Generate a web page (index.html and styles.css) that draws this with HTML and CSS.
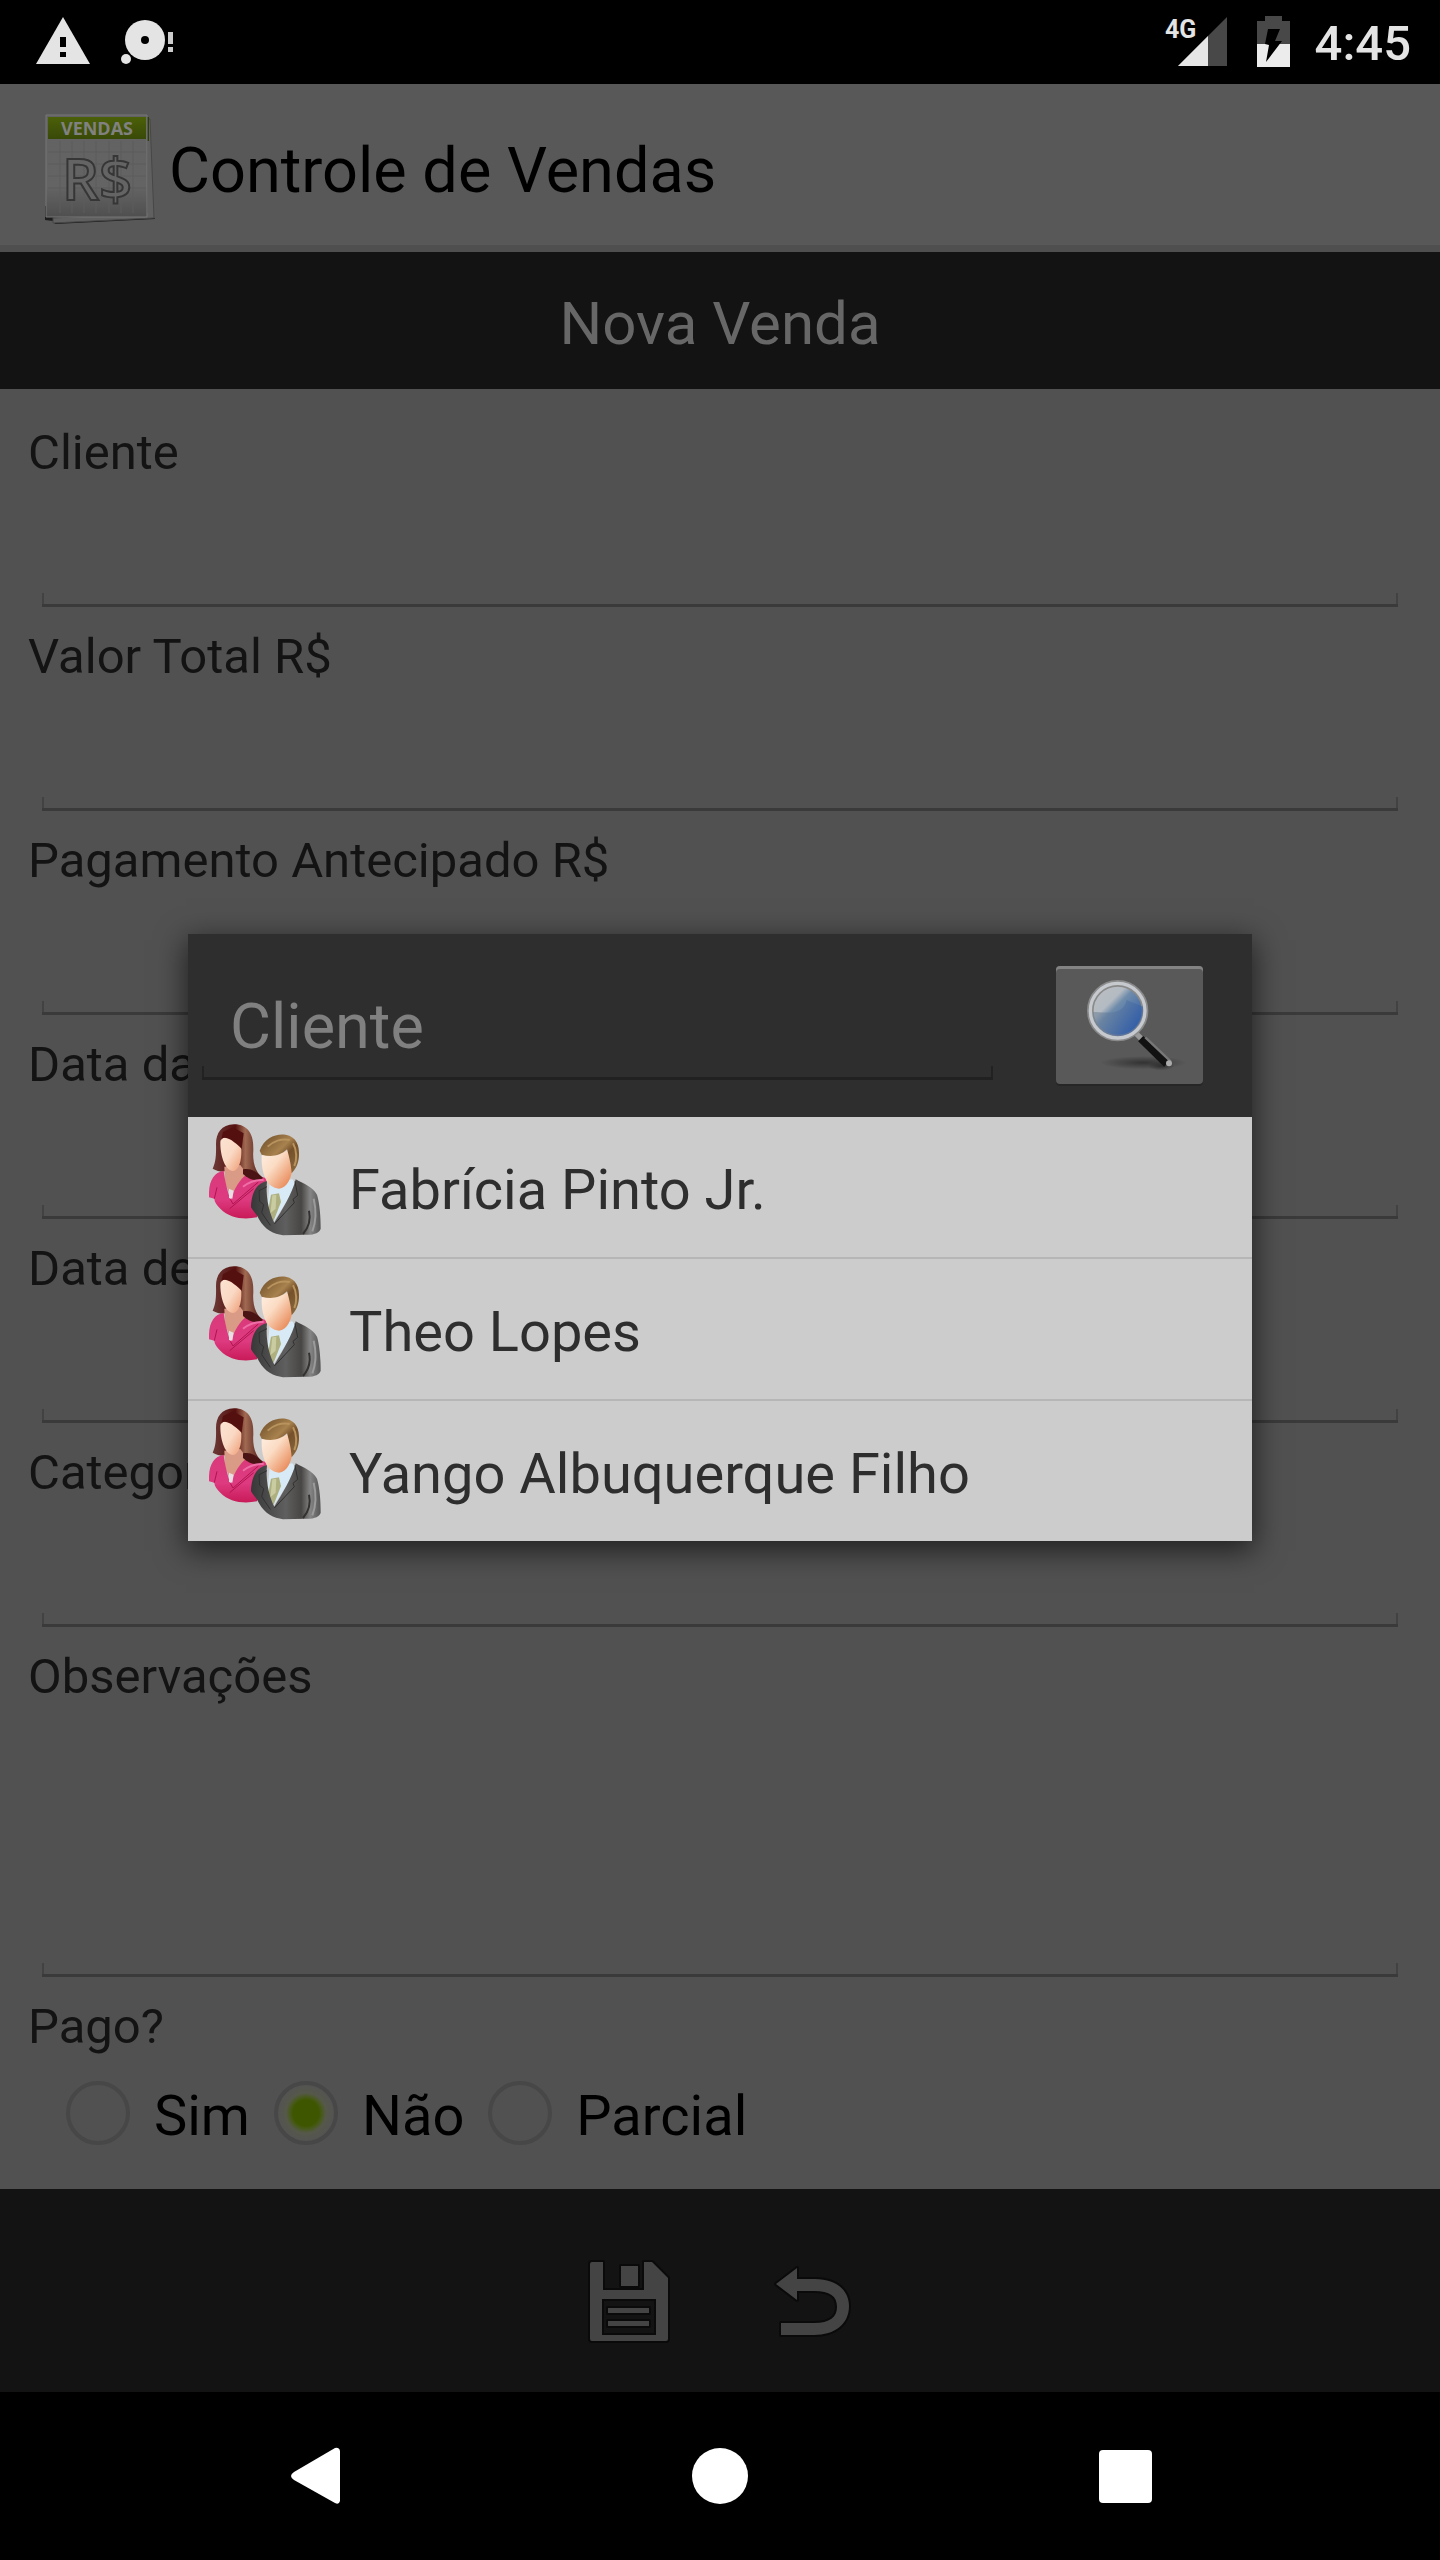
FILE: index.html
```html
<!DOCTYPE html>
<html lang="pt-BR">
<head>
<meta charset="utf-8">
<title>Controle de Vendas</title>
<meta name="viewport" content="width=device-width, initial-scale=1">
<link rel="stylesheet" href="styles.css">
</head>
<body>
<svg class="defs" width="0" height="0" aria-hidden="true">
  <defs>
    <linearGradient id="hairW" x1="0" y1="0" x2="1" y2="0"><stop offset="0" stop-color="#6d3a36"/><stop offset=".45" stop-color="#54100f"/><stop offset=".65" stop-color="#a06a52"/><stop offset="1" stop-color="#4a1414"/></linearGradient>
    <linearGradient id="faceW" x1="0" y1="0" x2="1" y2="1"><stop offset="0" stop-color="#fbe3d3"/><stop offset=".5" stop-color="#fad9c4"/><stop offset="1" stop-color="#ee9c74"/></linearGradient>
    <linearGradient id="pink" x1="0" y1="0" x2="0" y2="1"><stop offset="0" stop-color="#d93a7b"/><stop offset=".6" stop-color="#de3a80"/><stop offset="1" stop-color="#c81a58"/></linearGradient>
    <linearGradient id="hairM" x1="0" y1="0" x2="1" y2="1"><stop offset="0" stop-color="#6b4a26"/><stop offset=".45" stop-color="#a8824e"/><stop offset=".6" stop-color="#75502a"/><stop offset="1" stop-color="#8d6d42"/></linearGradient>
    <linearGradient id="faceM" x1="0" y1="0" x2="1" y2="1"><stop offset="0" stop-color="#fff0e4"/><stop offset=".4" stop-color="#fbdcc4"/><stop offset="1" stop-color="#e4743c"/></linearGradient>
    <linearGradient id="suit" x1="0" y1="0" x2="1" y2="0"><stop offset="0" stop-color="#383838"/><stop offset=".5" stop-color="#5f5f5f"/><stop offset=".72" stop-color="#484644"/><stop offset=".85" stop-color="#858585"/><stop offset="1" stop-color="#555"/></linearGradient>
    <symbol id="people" viewBox="88 612 336 336">
      <path d="M163 613C125 614 109 640 109 672C110 706 108 728 99 746C120 758 140 755 150 750L190 756C205 782 232 786 250 774C226 758 218 722 221 690C223 645 206 613 163 613Z" fill="url(#hairW)"/>
      <path d="M134 740L182 735L204 766L160 842L136 790Z" fill="#d99a86"/>
      <path d="M122 668C122 650 140 650 152 656C168 662 184 670 185 690C186 722 178 752 160 753C138 752 122 712 122 668Z" fill="url(#faceW)"/>
      <path d="M124 662C128 646 150 650 186 686L192 640L160 622L130 636Z" fill="#54100f"/>
      <path d="M88 832C86 786 100 758 132 752C136 786 144 812 152 838C164 806 182 776 200 764C226 766 244 768 262 776L232 892C190 900 150 894 122 866C112 856 104 846 104 836Z" fill="url(#pink)"/>
      <path d="M190 748C214 744 226 752 250 774C232 786 208 780 190 762Z" fill="#4a1414"/>
      <path d="M104 836L112 802M152 838L160 852L236 786M150 866L222 806" fill="none" stroke="#b0144f" stroke-width="3"/>
      <path d="M148 806L162 812L158 836L148 834Z" fill="#e8dfe4"/>
      <path d="M190 800C210 784 230 778 252 780" fill="none" stroke="#ee6fa6" stroke-width="6"/>
      <path d="M270 790L338 778L352 796L282 905L262 880Z" fill="#d9eaf7"/>
      <path d="M274 824L298 820L304 846L282 902L264 878Z" fill="#aeb07f"/>
      <path d="M278 826L290 824L288 866L272 880Z" fill="#c9cba0"/>
      <path d="M246 706C274 700 308 706 326 688L340 730C338 774 322 804 298 806C262 804 244 762 246 706Z" fill="url(#faceM)"/>
      <path d="M240 692C254 652 290 640 318 644C350 650 360 676 358 708C356 736 346 748 336 760C334 734 330 716 322 688C302 708 274 712 246 704Z" fill="url(#hairM)"/>
      <path d="M264 680C280 664 306 654 330 660M340 670C352 690 352 720 344 738" fill="none" stroke="#b8935d" stroke-width="6"/>
      <path d="M262 784C236 788 216 810 214 862C222 876 232 884 238 898C256 930 282 942 310 946L376 944C402 946 420 938 423 926C423 890 420 850 412 824C398 800 374 792 348 778C338 820 306 872 284 908C264 870 258 820 262 784Z" fill="url(#suit)"/>
      <path d="M346 784L354 826L340 838L344 848L284 912M262 800L238 812L240 844L252 854L246 878L272 916" fill="none" stroke="#303030" stroke-width="3"/>
      <path d="M388 872C394 900 386 924 370 942" fill="none" stroke="#343230" stroke-width="6"/>
      <path d="M402 836C410 870 408 908 398 934" fill="none" stroke="#9b9b9b" stroke-width="6"/>
    </symbol>
  </defs>
</svg>

<div class="screen">
  <div class="status">
    <svg width="180" height="84" viewBox="0 0 180 84" aria-hidden="true">
      <path d="M63 17L90 64H36Z" fill="#e4e4e4"/>
      <path d="M60 37h6v10h-6zM60 52h6v5h-6z" fill="#000"/>
      <circle cx="145" cy="40" r="20" fill="#e4e4e4"/>
      <circle cx="145" cy="40" r="4" fill="#000"/>
      <circle cx="126" cy="59" r="5" fill="#e4e4e4"/>
      <path d="M168 32h5v12h-5zM168 47h5v5h-5z" fill="#ccc"/>
    </svg>
    <div class="status-right">
      <svg width="140" height="84" viewBox="1159 0 140 84" aria-hidden="true">
        <path d="M1227 17V66H1178Z" fill="#484848"/>
        <path d="M1208 36V66H1178Z" fill="#e6e6e6"/>
        <text x="1165" y="38" class="net">4G</text>
        <path d="M1265 16h17v5h8v24h-33V21h8z" fill="#484848"/>
        <path d="M1257 44h33v23h-33z" fill="#ececec"/>
        <path d="M1268 29L1280 29L1275 41L1282 41L1266 62L1269 45L1265 44Z" fill="#000"/>
      </svg>
      <span class="clock">4:45</span>
    </div>
  </div>

  <header class="appbar">
    <svg width="112" height="112" viewBox="45 111 112 112" aria-hidden="true">
      <defs>
        <linearGradient id="page" x1="0" y1="0" x2="0" y2="1"><stop offset="0" stop-color="#626262"/><stop offset=".7" stop-color="#646464"/><stop offset="1" stop-color="#4f4f4f"/></linearGradient>
        <linearGradient id="green" x1="0" y1="0" x2="0" y2="1"><stop offset="0" stop-color="#4b6009"/><stop offset="1" stop-color="#394908"/></linearGradient>
      </defs>
      <path d="M45 205v14l8 1 2 3 100-5-8-10z" fill="#1d1d1d"/>
      <path d="M53 217L147 212V118L150 118L154 217L53 222Z" fill="#606060" stroke="#474747"/>
      <path d="M147 116h2v24h-2z" fill="#2f3e08"/>
      <path d="M46 114h101v102H46z" fill="url(#page)" stroke="#777" stroke-width="1"/>
      <path d="M60 140v72M72 140v72M84 140v72M96 140v72M109 140v72M121 140v72M133 140v72M48 151h98M48 163h98M48 175h98M48 187h98M48 199h98" stroke="#5c5c5c" fill="none"/>
      <path d="M48 116h98v22H48z" fill="url(#green)"/>
      <text x="97" y="134" text-anchor="middle" class="logo-name">VENDAS</text>
      <text x="97" y="199" text-anchor="middle" class="logo-cash">R$</text>
    </svg>
    <h1 class="app-title">Controle de Vendas</h1>
  </header>

  <h2 class="section-title">Nova Venda</h2>

  <form class="form">
    <label class="label" for="cliente">Cliente</label>
    <input class="field" id="cliente" type="text">
    <label class="label" for="total">Valor Total R$</label>
    <input class="field" id="total" type="text">
    <label class="label" for="antecipado">Pagamento Antecipado R$</label>
    <input class="field" id="antecipado" type="text">
    <label class="label" for="data-venda">Data da Venda</label>
    <input class="field" id="data-venda" type="text">
    <label class="label" for="data-pagamento">Data de Pagamento</label>
    <input class="field" id="data-pagamento" type="text">
    <label class="label" for="categoria">Categoria</label>
    <input class="field" id="categoria" type="text">
    <label class="label" for="obs">Observações</label>
    <textarea class="field field-tall" id="obs"></textarea>
    <fieldset class="paid">
      <legend class="label">Pago?</legend>
      <div class="radios">
        <label class="option"><input type="radio" name="pago"><span>Sim</span></label>
        <label class="option"><input type="radio" name="pago" checked><span>Não</span></label>
        <label class="option"><input type="radio" name="pago"><span>Parcial</span></label>
      </div>
    </fieldset>
  </form>

  <div class="actions">
    <button class="icon-button" type="button" aria-label="Salvar">
      <svg width="112" height="112" viewBox="0 0 112 112">
        <g fill="#444" stroke="#0a0a0a" stroke-width="4" stroke-linejoin="round" paint-order="stroke">
          <path fill-rule="evenodd" d="M20 17H31V45H72V17H80L96 33V94Q96 96 94 96H20Q18 96 18 94V19Q18 17 20 17ZM30 54V90H84V54Z"/>
          <path d="M49 21h17v20H49zM36 63h41v5H36zM36 76h41v5H36z"/>
        </g>
      </svg>
    </button>
    <button class="icon-button" type="button" aria-label="Voltar">
      <svg width="112" height="112" viewBox="0 0 112 112">
        <path d="M20 39L41 23V34H59C81 34 93 46 93 61C93 79 79 90 58 90H25V78H58C74 78 81 72 81 62C81 51 74 46 58 46H41V55Z" fill="#444" stroke="#0a0a0a" stroke-width="4" stroke-linejoin="round" paint-order="stroke"/>
      </svg>
    </button>
  </div>

  <nav class="navbar">
    <button class="icon-button" type="button" aria-label="Anterior"><svg width="64" height="64" viewBox="0 0 64 64"><path d="M57 7V57Q56 61 52 59L11 36Q5 32 11 28L52 4Q56 3 57 7Z" fill="#fff"/></svg></button>
    <button class="icon-button" type="button" aria-label="Início"><svg width="64" height="64" viewBox="0 0 64 64"><circle cx="32" cy="32" r="28" fill="#fff"/></svg></button>
    <button class="icon-button" type="button" aria-label="Recentes"><svg width="64" height="64" viewBox="0 0 64 64"><rect x="6" y="6" width="53" height="53" rx="4" fill="#fff"/></svg></button>
  </nav>
</div>

<div class="overlay">
  <div class="dialog" role="dialog" aria-label="Selecionar cliente">
    <form class="search">
      <input class="field search-field" type="text" placeholder="Cliente" aria-label="Cliente">
      <button class="search-button" type="button" aria-label="Pesquisar">
        <svg width="147" height="118" viewBox="288 138 441 354">
          <defs>
            <linearGradient id="lens" x1=".1" y1=".1" x2=".8" y2=".8"><stop offset="0" stop-color="#b9bec2"/><stop offset=".36" stop-color="#b4bbc2"/><stop offset=".5" stop-color="#6f8cab"/><stop offset="1" stop-color="#3560a8"/></linearGradient>
            <linearGradient id="low" x1="0" y1="0" x2="1" y2=".3"><stop offset="0" stop-color="#7d8c95"/><stop offset="1" stop-color="#3560a8"/></linearGradient>
            <radialGradient id="drop"><stop offset="0" stop-color="#222" stop-opacity=".7"/><stop offset="1" stop-color="#222" stop-opacity="0"/></radialGradient>
          </defs>
          <ellipse cx="550" cy="428" rx="130" ry="20" fill="url(#drop)"/>
          <ellipse cx="604" cy="438" rx="40" ry="14" fill="url(#drop)"/>
          <path d="M528 340L546 358" stroke="#999" stroke-width="16"/>
          <path d="M542 356L620 432" stroke="#121212" stroke-width="22"/>
          <path d="M556 352L632 424" stroke="#777" stroke-width="7"/>
          <circle cx="627" cy="430" r="9" fill="#aaa"/>
          <circle cx="473" cy="272" r="82" fill="url(#lens)" stroke="#8a8a8a" stroke-width="20"/>
          <path d="M398 276C430 276 490 290 500 240L549 260C552 310 516 350 473 350C430 350 398 316 398 276Z" fill="url(#low)" opacity=".6"/>
          <circle cx="473" cy="272" r="82" fill="none" stroke="#c6c9ce" stroke-width="10"/>
        </svg>
      </button>
    </form>
    <ul class="clients">
      <li class="client"><svg width="112" height="112" aria-hidden="true"><use href="#people"/></svg><span class="client-name">Fabrícia Pinto Jr.</span></li>
      <li class="client"><svg width="112" height="112" aria-hidden="true"><use href="#people"/></svg><span class="client-name">Theo Lopes</span></li>
      <li class="client"><svg width="112" height="112" aria-hidden="true"><use href="#people"/></svg><span class="client-name">Yango Albuquerque Filho</span></li>
    </ul>
  </div>
</div>
</body>
</html>
```
FILE: styles.css
```css
* { box-sizing: border-box; }

body {
  margin: 0;
  background: #000;
  font-family: Roboto, "Liberation Sans", sans-serif;
  font-size: 49px;
  color: #131313;
}

svg { display: block; flex: none; }
.defs { position: absolute; }

button, input, textarea {
  margin: 0;
  padding: 0;
  border: 0;
  border-radius: 0;
  background: none;
  font: inherit;
  outline: none;
}

.screen {
  display: flex;
  flex-direction: column;
  min-height: 100vh;
}

/* Status bar */
.status {
  display: flex;
  justify-content: space-between;
  height: 84px;
  background: #000;
}
.status-right {
  display: flex;
  align-items: center;
  gap: 16px;
  padding-right: 29px;
}
.net { font-size: 25px; font-weight: 700; fill: #e4e4e4; }
.clock {
  padding-top: 4px;
  font-weight: 500;
  line-height: 58px;
  color: #e4e4e4;
}

/* App header */
.appbar {
  display: flex;
  align-items: center;
  gap: 12px;
  height: 168px;
  padding: 0 45px;
  background: #585858;
  box-shadow: inset 0 -7px #4f4f4f;
}
.app-title {
  margin: 0;
  padding-top: 6px;
  font-size: 63px;
  font-weight: 400;
  line-height: 74px;
  color: #000;
}
.logo-name { font-family: "Open Sans", sans-serif; font-size: 18px; font-weight: 700; fill: #818181; }
.logo-cash { font-family: "Open Sans", sans-serif; font-size: 58px; font-weight: 600; fill: #646464; stroke: #363636; stroke-width: 2; }

.section-title {
  margin: 0;
  padding: 35px 0 28px;
  background: #131313;
  font-size: 60px;
  font-weight: 400;
  line-height: 74px;
  text-align: center;
  color: #676767;
}

/* Form */
.form {
  flex: 1;
  display: flex;
  flex-direction: column;
  padding: 35px 28px 18px;
  background: #515151;
}
.label {
  display: block;
  padding: 0;
  line-height: 57px;
}
.field {
  --line: #3a3a3a;
  --tick: #424242;
  height: 126px;
  margin: 0 14px 21px;
  padding: 0 28px;
  background:
    linear-gradient(var(--line), var(--line)) bottom / 100% 3px no-repeat,
    linear-gradient(var(--tick), var(--tick)) left bottom / 2px 14px no-repeat,
    linear-gradient(var(--tick), var(--tick)) right bottom / 2px 14px no-repeat;
}
.field-tall {
  height: 272px;
  resize: none;
}
.paid {
  margin: 0;
  padding: 0;
  border: 0;
}
.radios {
  display: flex;
  height: 116px;
  padding-left: 14px;
}
.option {
  display: flex;
  align-items: center;
  font-size: 56px;
  line-height: 66px;
  color: #000;
}
.option span { padding-top: 6px; }
.option input {
  appearance: none;
  width: 64px;
  height: 64px;
  margin: 0 24px;
  border: 4px solid #474747;
  border-radius: 50%;
}
.option input:checked {
  background: radial-gradient(circle, #3f5600 0 13px, #485a1c 16px, #55584a 20px, #535353 29px);
}

/* Bottom bars */
.actions {
  display: flex;
  justify-content: center;
  gap: 72px;
  padding: 56px 0 35px;
  background: #131313;
}
.icon-button {
  display: flex;
  align-items: center;
  justify-content: center;
}
.navbar {
  display: flex;
  height: 168px;
  padding: 0 112px;
  background: #000;
}
.navbar .icon-button { flex: 1; }

/* Client picker */
.overlay {
  position: fixed;
  inset: 84px 0 170px;
  display: flex;
  align-items: center;
  padding: 0 188px;
}
.dialog {
  flex: 1;
  min-width: 0;
  box-shadow: 0 8px 28px 2px rgba(0, 0, 0, .6);
}
.search {
  display: flex;
  align-items: flex-start;
  gap: 63px;
  padding: 32px 49px 33px 14px;
  background: #2e2e2e;
}
.search-field {
  --line: #212121;
  --tick: #222;
  flex: 1;
  min-width: 0;
  height: 114px;
  margin: 0;
  padding-top: 7px;
  font-size: 63px;
  color: #ccc;
}
.search-field::placeholder { color: #808080; opacity: 1; }
.search-button {
  border-radius: 4px;
  background: #595959;
  box-shadow: inset 0 3px #838383, 0 2px #262626;
}
.clients {
  margin: 0;
  padding: 0;
  list-style: none;
  background: #ccc;
}
.client {
  display: flex;
  align-items: center;
  gap: 28px;
  padding: 7px 21px 21px;
}
.client + .client { border-top: 2px solid #b6b6b6; }
.client-name {
  padding-top: 20px;
  font-size: 56px;
  line-height: 66px;
  color: #2e2e2e;
}
```
